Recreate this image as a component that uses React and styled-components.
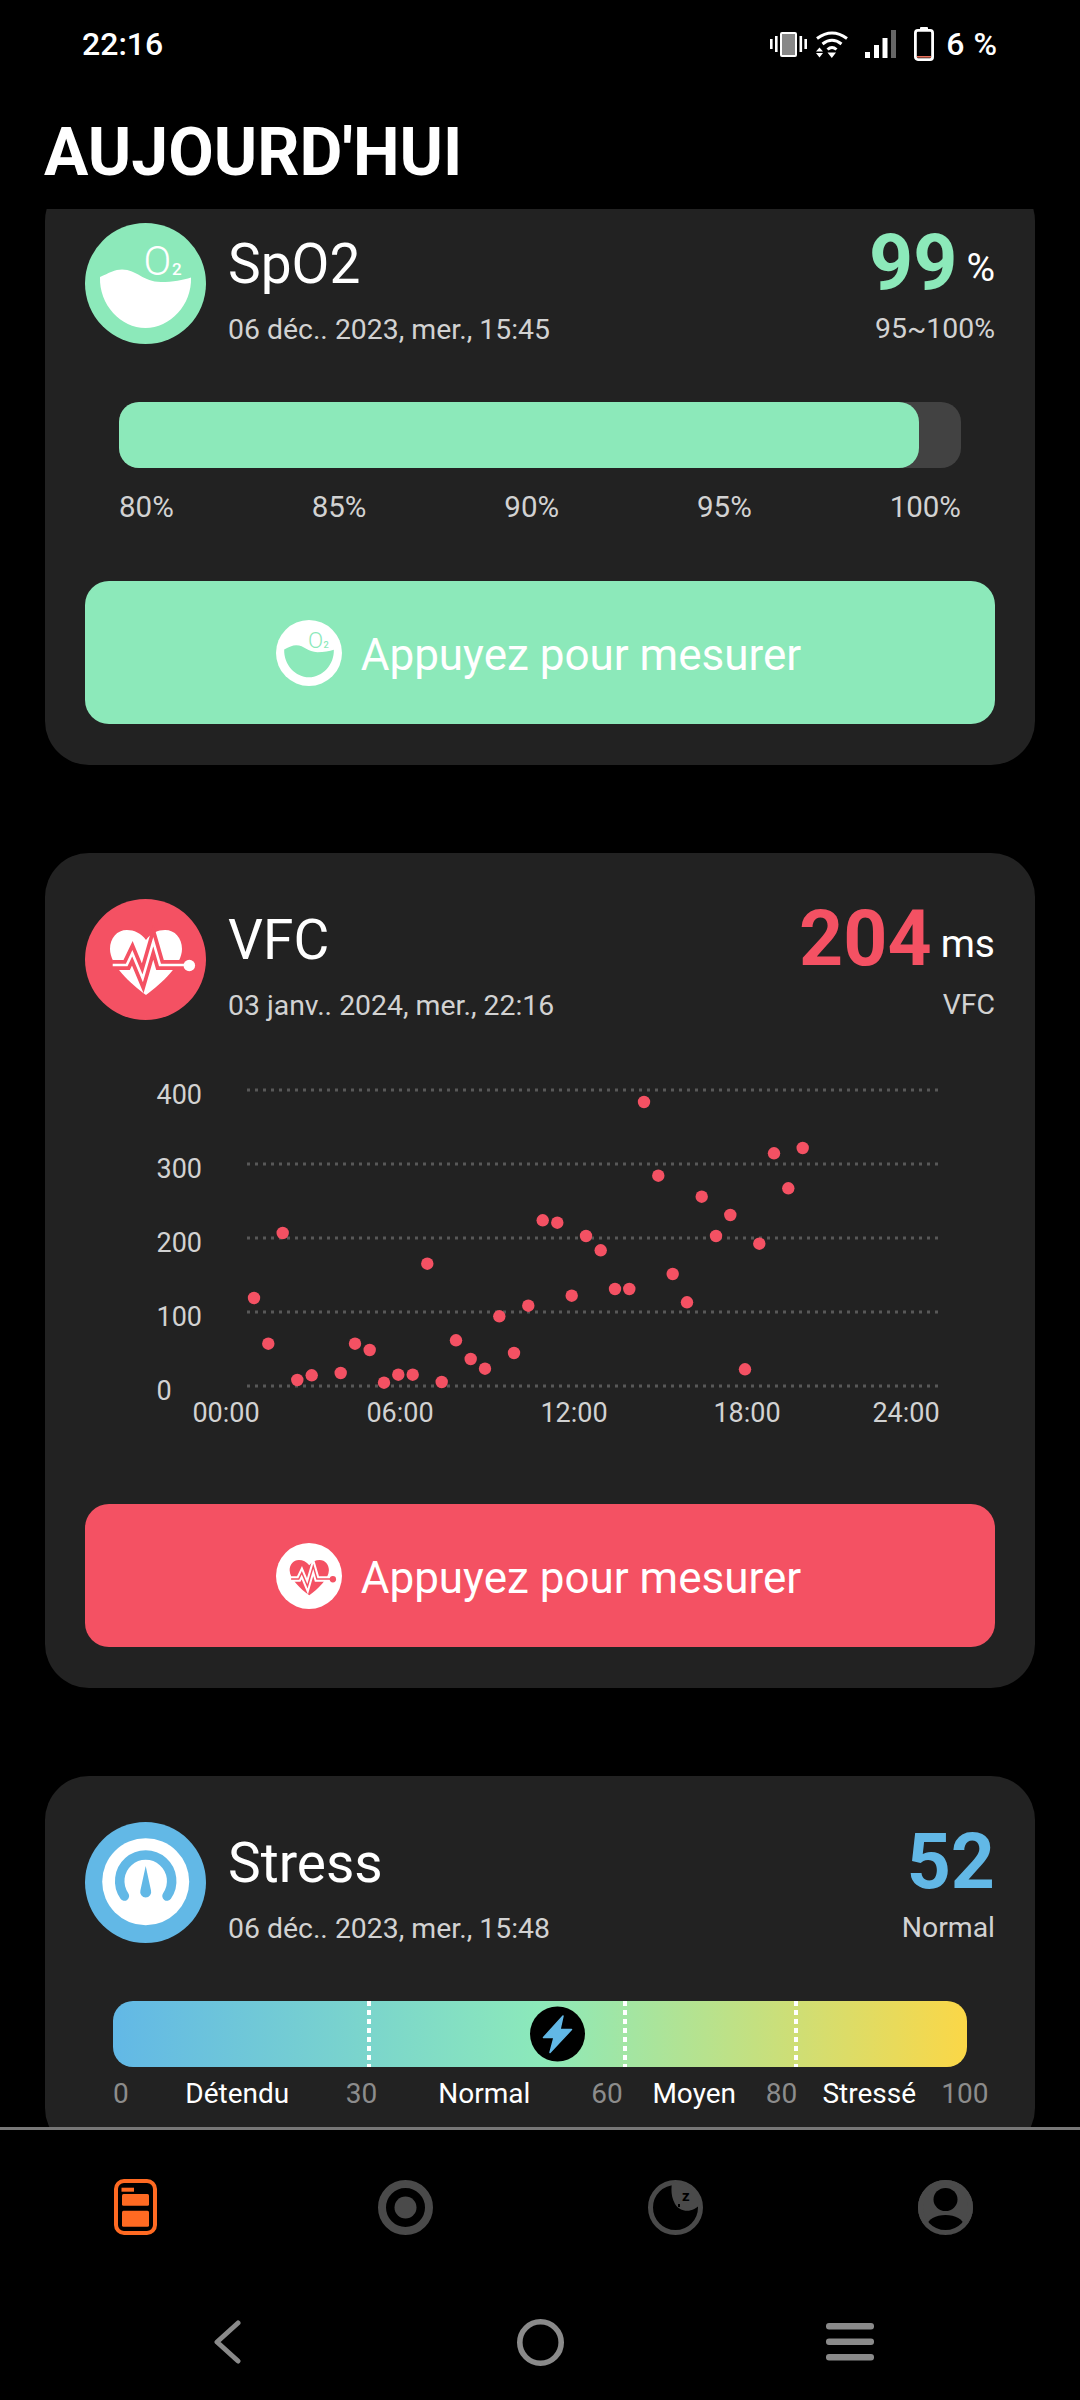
import React from "react";
import styled, { createGlobalStyle } from "styled-components";

const GREEN = "#8CE9BA";
const RED = "#F45163";
const BLUE = "#62B8E6";
const ORANGE = "#FF6A22";
const TAB_GREY = "#4a4a4a";
const NAV_GREY = "#8a8a8a";
const CARD = "#222222";

const hrvPoints = [
  [254, 1298], [268.3, 1343.7], [282.7, 1233], [297.3, 1380], [311.7, 1375.3], [340.7, 1373],
  [355, 1343.7], [369.7, 1350], [384, 1382.7], [398.3, 1374.7], [412.7, 1374.7], [427.3, 1263.7],
  [441.7, 1382], [456, 1340.3], [470.7, 1359], [485, 1368.7], [499.3, 1316.3], [514, 1353],
  [528.3, 1305.7], [542.7, 1220.3], [557.3, 1222.7], [571.7, 1295.7], [586, 1236], [600.7, 1250.3],
  [615, 1289], [629.3, 1289], [644, 1102], [658.3, 1175.7], [672.7, 1274], [687, 1302.3],
  [701.7, 1196.7], [716, 1236], [730.3, 1215], [745, 1369.3], [759.3, 1243.7], [774, 1153.3],
  [788.3, 1188.3], [802.7, 1148],
];
const gridLines = [
  { label: "400", line: 1090, base: 1104 },
  { label: "300", line: 1164, base: 1178 },
  { label: "200", line: 1238, base: 1252 },
  { label: "100", line: 1312, base: 1326 },
  { label: "0", line: 1386, base: 1400 },
];
const hours = [
  { label: "00:00", x: 226 },
  { label: "06:00", x: 400 },
  { label: "12:00", x: 574 },
  { label: "18:00", x: 747 },
  { label: "24:00", x: 906 },
];

const GlobalStyle = createGlobalStyle`
  html, body {
    margin: 0;
    background: #000;
    font-family: Roboto, "Liberation Sans", sans-serif;
  }
`;

const Screen = styled.div`
  width: 1080px;
  height: 2400px;
  display: flex;
  flex-direction: column;
  overflow: hidden;
  background: #000;
  color: #fff;
`;
const StatusBar = styled.div`
  height: 88px;
  flex: none;
  display: flex;
  align-items: center;
  justify-content: space-between;
  padding: 0 83px 0 82px;
  font-size: 32px;
  font-weight: 500;
`;
const StatusRight = styled.div`
  display: flex;
  align-items: center;
`;
const StatusIcon = styled.svg`
  display: block;
  flex: none;
  margin-left: ${(p) => p.$left}px;
`;
const BatteryText = styled.span`
  margin-left: 12px;
  word-spacing: 1px;
`;
const PageTitle = styled.h1`
  margin: 0;
  flex: none;
  height: 121px;
  padding: 28px 0 0 44px;
  box-sizing: border-box;
  font-size: 66px;
  line-height: 74px;
  font-weight: 700;
`;
const Scroller = styled.div`
  flex: 1;
  min-height: 0;
  overflow: hidden;
  padding: 0 45px;
`;
const Cards = styled.div`
  display: flex;
  flex-direction: column;
  gap: 88px;
  margin-top: -32px;
`;
const Card = styled.section`
  background: ${CARD};
  border-radius: 44px;
  padding: 46px 40px 41px;
`;
const Header = styled.div`
  display: flex;
  align-items: flex-start;
  height: 121px;
`;
const IconDisc = styled.svg`
  display: block;
  flex: none;
`;
const TitleBlock = styled.div`
  flex: 1;
  margin-left: 22px;
  padding-top: 9px;
`;
const CardTitle = styled.div`
  font-size: 55px;
  line-height: 64px;
`;
const SubText = styled.div`
  font-size: 28.4px;
  line-height: 34px;
  color: #d2d2d2;
  margin-top: ${(p) => p.$top || 0}px;
`;
const ValueBlock = styled.div`
  display: flex;
  flex-direction: column;
  align-items: flex-end;
`;
const ValueRow = styled.div`
  display: flex;
  align-items: center;
  height: 80px;
  line-height: 80px;
`;
const Value = styled.span`
  font-size: 77px;
  font-weight: 700;
  color: ${(p) => p.$color};
`;
const Unit = styled.span`
  font-size: 39px;
  line-height: 46px;
  margin-left: 9px;
  padding-top: 9px;
`;
const Track = styled.div`
  height: 66px;
  margin: 58px 34px 0;
  border-radius: 20px;
  background: #424242;
`;
const Fill = styled.div`
  height: 100%;
  border-radius: 20px;
  background: ${GREEN};
`;
const Scale = styled.div`
  display: flex;
  justify-content: space-between;
  margin: 22px 34px 0;
  font-size: 29.5px;
  line-height: 34px;
  color: #d2d2d2;
`;
const MeasureButton = styled.button`
  display: flex;
  align-items: center;
  justify-content: center;
  gap: 19px;
  width: 100%;
  height: 143px;
  margin-top: ${(p) => p.$top}px;
  padding: 0 3px 0 0;
  border: none;
  border-radius: 24px;
  background: ${(p) => p.$color};
  color: #fff;
  font-family: inherit;
  font-size: 44px;
`;
const ButtonLabel = styled.span`
  padding-top: 5px;
`;
const ChartSvg = styled.svg`
  display: block;
  margin-top: 30px;
  font-family: Roboto, "Liberation Sans", sans-serif;
`;
const StressBar = styled.div`
  position: relative;
  height: 66px;
  margin: 58px 28px 0;
  border-radius: 20px;
  background: linear-gradient(90deg, ${BLUE} 0%, ${GREEN} 50%, #fbd747 100%);
`;
const Dash = styled.span`
  position: absolute;
  top: 0;
  bottom: 0;
  left: ${(p) => p.$at}%;
  width: 4px;
  margin-left: -2px;
  background: repeating-linear-gradient(180deg, #fff 0 5px, transparent 5px 9px);
`;
const Thumb = styled.svg`
  position: absolute;
  top: 5px;
  left: ${(p) => p.$at}%;
  margin-left: -27.5px;
`;
const ZoneRow = styled.div`
  display: flex;
  margin: 10px 0 0 28px;
  font-size: 28px;
  line-height: 34px;
`;
const ZoneNumber = styled.span`
  color: #8c8c8c;
`;
const ZoneName = styled.span`
  width: ${(p) => p.$width}px;
  text-align: center;
`;
const TabBar = styled.nav`
  flex: none;
  height: 154px;
  display: grid;
  grid-template-columns: repeat(4, 1fr);
  align-items: center;
  justify-items: center;
  border-top: 3px solid #777;
`;
const NavBar = styled.div`
  flex: none;
  height: 116px;
  display: flex;
  align-items: center;
  padding-left: 213px;
`;
const NavIcon = styled.svg`
  display: block;
  flex: none;
  margin-left: ${(p) => p.$left || 0}px;
`;

function VibrateIcon() {
  return (
    <StatusIcon $left={0} width="37" height="25" viewBox="0 0 37 25">
      <g fill="#fff">
        <rect x="0" y="7" width="2.6" height="10" />
        <rect x="5" y="4" width="2.6" height="16" />
        <rect x="29.5" y="4" width="2.6" height="16" />
        <rect x="34.4" y="7" width="2.6" height="10" />
      </g>
      <rect x="11" y="1" width="15" height="23" rx="1" fill="#888" stroke="#fff" strokeWidth="2" />
    </StatusIcon>
  );
}

function WifiIcon() {
  return (
    <StatusIcon $left={9} width="32" height="27" viewBox="0 0 32 27">
      <g fill="none" stroke="#fff" strokeWidth="3">
        <path d="M1 7.5Q16 -3.5 31 7.5" />
        <path d="M6.5 13Q16 5.5 25.5 13" />
        <path d="M11.5 18.5Q16 14.5 20.5 18.5" />
      </g>
      <path d="M3.5 16.5L7 20.5H0ZM0 22H7L3.5 26.5ZM11.5 21.5H20L15.8 27Z" fill="#fff" />
    </StatusIcon>
  );
}

function SignalIcon() {
  return (
    <StatusIcon $left={17} width="31" height="28" viewBox="0 0 31 28">
      <rect x="0" y="22" width="5" height="6" fill="#fff" />
      <rect x="9" y="15" width="5" height="13" fill="#fff" />
      <rect x="17.5" y="8" width="5" height="20" fill="#fff" />
      <rect x="26" y="0" width="5" height="28" fill="#666" />
    </StatusIcon>
  );
}

function BatteryIcon() {
  return (
    <StatusIcon $left={18} width="20" height="34" viewBox="0 0 20 34">
      <rect x="6" y="0" width="8" height="4" rx="1" fill="#fff" />
      <rect x="1.4" y="3.4" width="17.2" height="29.2" rx="2.5" fill="none" stroke="#fff" strokeWidth="2.8" />
      <rect x="3" y="29" width="14" height="1.6" fill="#e8705a" />
    </StatusIcon>
  );
}

function OxygenIcon({ size = 121, bg, fg }) {
  return (
    <IconDisc width={size} height={size} viewBox="0 0 121 121">
      <circle cx="60.5" cy="60.5" r="60.5" fill={bg} />
      <path
        d="M15 54C24 50 30 46.5 37 46.5C52 46.5 58 59 76 59C88 59 98 57 106 54.5C107 82 85 105 60.5 105C36 105 14 82 15 54Z"
        fill={fg}
      />
      <text x="58.5" y="52" fontSize="41" fontWeight="300" fontFamily="Roboto" fill={fg}>
        O
      </text>
      <text x="87" y="52" fontSize="17" fontWeight="500" fontFamily="Roboto" fill={fg}>
        2
      </text>
    </IconDisc>
  );
}

function HeartIcon({ size = 121, bg, fg }) {
  const ecg = "M27.7 66H41.7L47.3 54.3L57.7 79.3L68.3 42.7L75 66H100";
  return (
    <IconDisc width={size} height={size} viewBox="0 0 121 121">
      <circle cx="60.5" cy="60.5" r="60.5" fill={bg} />
      <path
        d="M61 41C56 34 49 31 42 31C32 31 25 39 25 50C25 66 45 84 61 96C77 84 97 66 97 50C97 39 90 31 80 31C73 31 66 34 61 41Z"
        fill={fg}
      />
      <path d={ecg} fill="none" stroke={bg} strokeWidth="10" />
      <rect x="22" y="62" width="8" height="9" fill={bg} />
      <path d={ecg} fill="none" stroke={fg} strokeWidth="2.6" />
      <circle cx="104.3" cy="66.5" r="5.8" fill={fg} />
    </IconDisc>
  );
}

function GaugeIcon({ bg, fg }) {
  return (
    <IconDisc width="121" height="121" viewBox="0 0 121 121">
      <circle cx="60.5" cy="60.5" r="60.5" fill={bg} />
      <circle cx="60.7" cy="59.7" r="43.5" fill={fg} />
      <path d="M39.4 74A26 26 0 1 1 82 74" fill="none" stroke={bg} strokeWidth="9.5" strokeLinecap="round" />
      <path d="M60.7 44L66 68.5A5.5 5.5 0 1 1 55.4 68.5Z" fill={bg} />
    </IconDisc>
  );
}

function HrvChart() {
  return (
    <ChartSvg width="910" height="400" viewBox="85 1050 910 400">
      {gridLines.map((g) => (
        <g key={g.label}>
          <line x1="247" x2="939" y1={g.line} y2={g.line} stroke="#585858" strokeWidth="3" strokeDasharray="3 5" />
          <text x="156.5" y={g.base} fontSize="27" fill="#d2d2d2">
            {g.label}
          </text>
        </g>
      ))}
      {hours.map((h) => (
        <text key={h.label} x={h.x} y="1422" fontSize="27" fill="#d2d2d2" textAnchor="middle">
          {h.label}
        </text>
      ))}
      {hrvPoints.map(([x, y]) => (
        <circle key={`${x}-${y}`} cx={x} cy={y} r="6.2" fill={RED} />
      ))}
    </ChartSvg>
  );
}

function Spo2Card() {
  return (
    <Card>
      <Header>
        <OxygenIcon bg={GREEN} fg="#fff" />
        <TitleBlock>
          <CardTitle>SpO2</CardTitle>
          <SubText $top={17}>06 déc.. 2023, mer., 15:45</SubText>
        </TitleBlock>
        <ValueBlock>
          <ValueRow>
            <Value $color={GREEN}>99</Value>
            <Unit>%</Unit>
          </ValueRow>
          <SubText $top={9}>95~100%</SubText>
        </ValueBlock>
      </Header>
      <Track>
        <Fill style={{ width: `${((99 - 80) / 20) * 100}%` }} />
      </Track>
      <Scale>
        <span>80%</span>
        <span>85%</span>
        <span>90%</span>
        <span>95%</span>
        <span>100%</span>
      </Scale>
      <MeasureButton $color={GREEN} $top={57}>
        <OxygenIcon size={66} bg="#fff" fg={GREEN} />
        <ButtonLabel>Appuyez pour mesurer</ButtonLabel>
      </MeasureButton>
    </Card>
  );
}

function HrvCard() {
  return (
    <Card>
      <Header>
        <HeartIcon bg={RED} fg="#fff" />
        <TitleBlock>
          <CardTitle>VFC</CardTitle>
          <SubText $top={17}>03 janv.. 2024, mer., 22:16</SubText>
        </TitleBlock>
        <ValueBlock>
          <ValueRow>
            <Value $color={RED}>204</Value>
            <Unit>ms</Unit>
          </ValueRow>
          <SubText $top={9}>VFC</SubText>
        </ValueBlock>
      </Header>
      <HrvChart />
      <MeasureButton $color={RED} $top={54}>
        <HeartIcon size={66} bg="#fff" fg={RED} />
        <ButtonLabel>Appuyez pour mesurer</ButtonLabel>
      </MeasureButton>
    </Card>
  );
}

function StressCard() {
  return (
    <Card>
      <Header>
        <GaugeIcon bg={BLUE} fg="#fff" />
        <TitleBlock>
          <CardTitle>Stress</CardTitle>
          <SubText $top={17}>06 déc.. 2023, mer., 15:48</SubText>
        </TitleBlock>
        <ValueBlock>
          <ValueRow>
            <Value $color={BLUE}>52</Value>
          </ValueRow>
          <SubText $top={9}>Normal</SubText>
        </ValueBlock>
      </Header>
      <StressBar>
        <Dash $at={30} />
        <Dash $at={60} />
        <Dash $at={80} />
        <Thumb $at={52} width="55" height="56" viewBox="0 0 55 56">
          <circle cx="27.5" cy="28" r="27.5" fill="#000" />
          <path
            d="M33 10L13.5 31.5H24L20 46.5L41.5 23.5H30Z"
            fill={BLUE}
            stroke={BLUE}
            strokeWidth="1.5"
            strokeLinejoin="round"
          />
        </Thumb>
      </StressBar>
      <ZoneRow>
        <ZoneNumber>0</ZoneNumber>
        <ZoneName $width={217}>Détendu</ZoneName>
        <ZoneNumber>30</ZoneNumber>
        <ZoneName $width={214}>Normal</ZoneName>
        <ZoneNumber>60</ZoneNumber>
        <ZoneName $width={143}>Moyen</ZoneName>
        <ZoneNumber>80</ZoneNumber>
        <ZoneName $width={144}>Stressé</ZoneName>
        <ZoneNumber>100</ZoneNumber>
      </ZoneRow>
    </Card>
  );
}

function Tabs() {
  return (
    <TabBar>
      <svg width="43" height="56" viewBox="0 0 43 56">
        <rect x="2" y="2" width="39" height="52" rx="8" fill="none" stroke={ORANGE} strokeWidth="4" />
        <rect x="7.5" y="8.7" width="12.5" height="4" fill={ORANGE} />
        <rect x="8" y="15" width="27" height="11.7" rx="1.5" fill={ORANGE} />
        <rect x="8" y="31.7" width="27" height="16" rx="1.5" fill={ORANGE} />
      </svg>
      <svg width="55" height="55" viewBox="0 0 55 55">
        <circle cx="27.5" cy="27.5" r="23.5" fill="none" stroke={TAB_GREY} strokeWidth="8" />
        <circle cx="27.5" cy="27.5" r="11" fill={TAB_GREY} />
      </svg>
      <svg width="55" height="55" viewBox="0 0 55 55">
        <circle cx="27.5" cy="27.5" r="25" fill="none" stroke={TAB_GREY} strokeWidth="5" />
        <path d="M24 3A25 25 0 0 1 52 24C46 33 32 33 27 24C23 17 23 9 24 3Z" fill={TAB_GREY} />
        <text x="34" y="21" fontSize="15" fontWeight="700" fontFamily="Roboto" fill="#000">
          z
        </text>
        <rect x="30" y="24" width="2" height="3" fill="#000" />
      </svg>
      <svg width="55" height="55" viewBox="0 0 55 55">
        <circle cx="27.5" cy="27.5" r="27.5" fill={TAB_GREY} />
        <ellipse cx="27.5" cy="19.5" rx="12" ry="11.5" fill="#000" />
        <ellipse cx="27.5" cy="45" rx="18" ry="10" fill="#000" />
        <circle cx="27.5" cy="27.5" r="25" fill="none" stroke={TAB_GREY} strokeWidth="5" />
      </svg>
    </TabBar>
  );
}

function SystemNav() {
  return (
    <NavBar>
      <NavIcon width="28" height="44" viewBox="0 0 28 44">
        <path d="M25 3L4 22L25 41" fill="none" stroke={NAV_GREY} strokeWidth="5" strokeLinecap="round" strokeLinejoin="round" />
      </NavIcon>
      <NavIcon $left={276} width="47" height="47" viewBox="0 0 47 47">
        <circle cx="23.5" cy="23.5" r="20.7" fill="none" stroke={NAV_GREY} strokeWidth="5.6" />
      </NavIcon>
      <NavIcon $left={262} width="48" height="38" viewBox="0 0 48 38">
        <rect x="0" y="0" width="48" height="6.5" rx="3" fill={NAV_GREY} />
        <rect x="0" y="15.5" width="48" height="6.5" rx="3" fill={NAV_GREY} />
        <rect x="0" y="31" width="48" height="6.5" rx="3" fill={NAV_GREY} />
      </NavIcon>
    </NavBar>
  );
}

export default function App() {
  return (
    <Screen>
      <GlobalStyle />
      <StatusBar>
        <span>22:16</span>
        <StatusRight>
          <VibrateIcon />
          <WifiIcon />
          <SignalIcon />
          <BatteryIcon />
          <BatteryText>6 %</BatteryText>
        </StatusRight>
      </StatusBar>
      <PageTitle>AUJOURD'HUI</PageTitle>
      <Scroller>
        <Cards>
          <Spo2Card />
          <HrvCard />
          <StressCard />
        </Cards>
      </Scroller>
      <Tabs />
      <SystemNav />
    </Screen>
  );
}
